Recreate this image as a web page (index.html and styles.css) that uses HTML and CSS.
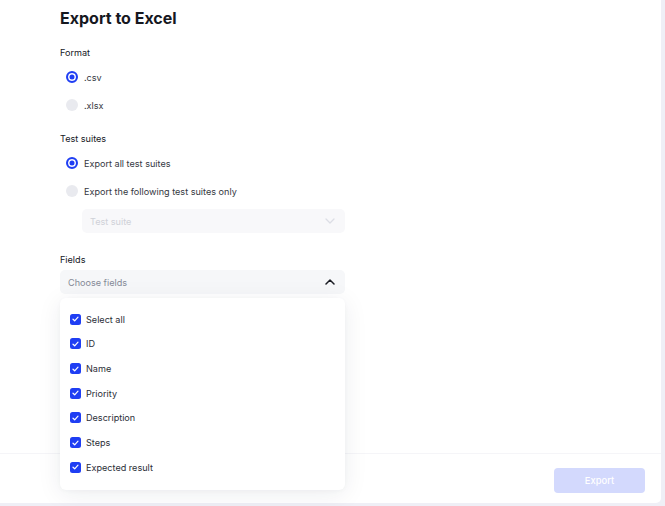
FILE: index.html
```html
<!DOCTYPE html>
<html>
<head>
<meta charset="utf-8">
<link rel="stylesheet" href="styles.css">
</head>
<body>
<div class="modal">
  <div class="content">
    <h1 class="title">Export to Excel</h1>

    <div class="section">
      <div class="label">Format</div>
      <div class="radio-row"><span class="radio checked"></span><span class="opt">.csv</span></div>
      <div class="radio-row"><span class="radio"></span><span class="opt">.xlsx</span></div>
    </div>

    <div class="section">
      <div class="label">Test suites</div>
      <div class="radio-row"><span class="radio checked"></span><span class="opt">Export all test suites</span></div>
      <div class="radio-row"><span class="radio"></span><span class="opt">Export the following test suites only</span></div>
      <div class="select disabled suite-select">
        <span class="placeholder">Test suite</span>
        <svg class="chev" width="10" height="6" viewBox="0 0 10 6"><path d="M1 1l4 4 4-4" fill="none" stroke="#dcdee5" stroke-width="1.3" stroke-linecap="round" stroke-linejoin="round"/></svg>
      </div>
    </div>

    <div class="section fields">
      <div class="label">Fields</div>
      <div class="select fields-select">
        <span class="placeholder dark">Choose fields</span>
        <svg class="chev" width="10" height="6" viewBox="0 0 10 6"><path d="M1 5l4-4 4 4" fill="none" stroke="#1b1d24" stroke-width="1.5" stroke-linecap="round" stroke-linejoin="round"/></svg>
      </div>
      <div class="dropdown">
        <div class="item"><span class="cb"><svg width="7" height="6" viewBox="0 0 7 6"><path d="M1 3.2l1.7 1.6L6 1.2" fill="none" stroke="#fff" stroke-width="1.2" stroke-linecap="round" stroke-linejoin="round"/></svg></span>Select all</div>
        <div class="item"><span class="cb"><svg width="7" height="6" viewBox="0 0 7 6"><path d="M1 3.2l1.7 1.6L6 1.2" fill="none" stroke="#fff" stroke-width="1.2" stroke-linecap="round" stroke-linejoin="round"/></svg></span>ID</div>
        <div class="item"><span class="cb"><svg width="7" height="6" viewBox="0 0 7 6"><path d="M1 3.2l1.7 1.6L6 1.2" fill="none" stroke="#fff" stroke-width="1.2" stroke-linecap="round" stroke-linejoin="round"/></svg></span>Name</div>
        <div class="item"><span class="cb"><svg width="7" height="6" viewBox="0 0 7 6"><path d="M1 3.2l1.7 1.6L6 1.2" fill="none" stroke="#fff" stroke-width="1.2" stroke-linecap="round" stroke-linejoin="round"/></svg></span>Priority</div>
        <div class="item"><span class="cb"><svg width="7" height="6" viewBox="0 0 7 6"><path d="M1 3.2l1.7 1.6L6 1.2" fill="none" stroke="#fff" stroke-width="1.2" stroke-linecap="round" stroke-linejoin="round"/></svg></span>Description</div>
        <div class="item"><span class="cb"><svg width="7" height="6" viewBox="0 0 7 6"><path d="M1 3.2l1.7 1.6L6 1.2" fill="none" stroke="#fff" stroke-width="1.2" stroke-linecap="round" stroke-linejoin="round"/></svg></span>Steps</div>
        <div class="item"><span class="cb"><svg width="7" height="6" viewBox="0 0 7 6"><path d="M1 3.2l1.7 1.6L6 1.2" fill="none" stroke="#fff" stroke-width="1.2" stroke-linecap="round" stroke-linejoin="round"/></svg></span>Expected result</div>
      </div>
    </div>
  </div>
  <div class="footer">
    <button class="export-btn">Export</button>
  </div>
</div>
</body>
</html>
```
FILE: styles.css
```css
* { box-sizing: border-box; }
html, body { margin: 0; padding: 0; }
body {
  background: #efeff6;
  font-family: Inter, "Noto Sans", sans-serif;
  color: #1b1d24;
  width: 665px;
  height: 506px;
  overflow: hidden;
}
.modal {
  width: 661px;
  height: 503px;
  background: #fff;
  border-bottom-right-radius: 5px;
  display: flex;
  flex-direction: column;
}
.content {
  flex: 1;
  padding: 8px 0 0 60px;
}
.title {
  margin: 0;
  font-size: 16px;
  line-height: 20px;
  font-weight: 700;
  color: #16181f;
}
.section {
  margin-top: 18px;
  width: 285px;
}
.section + .section { margin-top: 13px; }
.section.fields { margin-top: 20px; position: relative; }
.label {
  font-size: 9.1px;
  line-height: 14px;
  font-weight: 400;
  margin-bottom: 3px;
  color: #15171e;
}
.radio-row {
  display: flex;
  align-items: center;
  height: 28px;
  padding-left: 6px;
  gap: 6px;
  font-size: 9.1px;
  color: #353842;
}
.radio {
  width: 12px;
  height: 12px;
  border-radius: 50%;
  background: #e9eaef;
  flex: none;
}
.radio.checked {
  background: #fff;
  border: 2px solid #1f3ef3;
  box-shadow: inset 0 0 0 1.5px #fff, inset 0 0 0 6px #1f3ef3;
}
.select {
  height: 24px;
  border-radius: 5px;
  background: #f6f7f9;
  display: flex;
  align-items: center;
  justify-content: space-between;
  padding: 0 10px 0 8px;
  font-size: 9.1px;
}
.suite-select {
  margin-left: 22px;
  margin-top: 4px;
  width: 263px;
  background: #f8f8fa;
}
.placeholder { color: #cfd1d8; }
.placeholder.dark { color: #858a97; }
.fields-select { width: 285px; }
.dropdown {
  position: absolute;
  left: 0;
  top: 45px;
  width: 285px;
  background: #fff;
  border-radius: 6px;
  box-shadow: 0 4px 24px rgba(30, 35, 60, 0.08), 0 1px 4px rgba(30, 35, 60, 0.03);
  padding: 9px 0 10px 10px;
}
.item {
  height: 24.67px;
  display: flex;
  align-items: center;
  gap: 5px;
  font-size: 9.1px;
  color: #2b2e37;
}
.cb {
  width: 11px;
  height: 11px;
  border-radius: 2.5px;
  background: #1f3ef3;
  display: flex;
  align-items: center;
  justify-content: center;
  flex: none;
}
.footer {
  height: 50px;
  border-top: 1px solid #f5f5f8;
  display: flex;
  justify-content: flex-end;
  padding: 14px 16px 0 0;
}
.export-btn {
  width: 91px;
  height: 25px;
  border: none;
  border-radius: 4px;
  background: #d3d9fd;
  color: #fff;
  font-family: Inter, "Noto Sans", sans-serif;
  font-size: 9.4px;
  font-weight: 500;
}
```
